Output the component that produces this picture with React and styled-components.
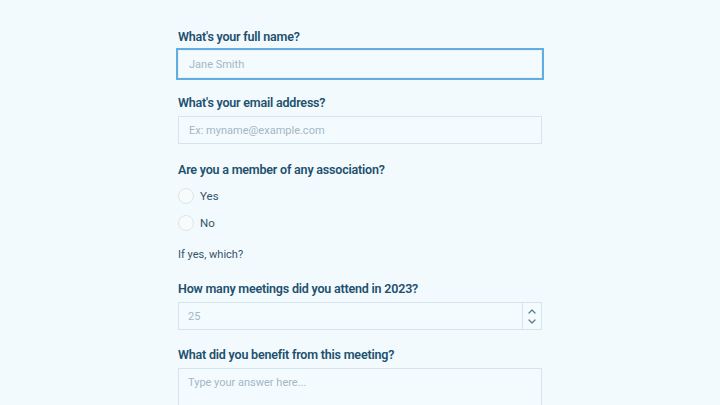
import React from "react";
import styled, { createGlobalStyle } from "styled-components";

const Global = createGlobalStyle`
  html, body { margin: 0; padding: 0; background: #f2fafd; }
  body { font-family: Roboto, "Liberation Sans", sans-serif; }
  * { box-sizing: border-box; }
`;

const Page = styled.div`
  width: 720px;
  height: 405px;
  overflow: hidden;
  background: #f2fafd;
  display: flex;
  justify-content: center;
  padding-top: 29px;
`;

const Form = styled.form`
  width: 364px;
  display: flex;
  flex-direction: column;
`;

const Field = styled.div`
  display: flex;
  flex-direction: column;
  gap: 5px;
  margin-bottom: ${(p) => p.$mb ?? 17}px;
`;

const Label = styled.label`
  font-size: 12.5px;
  line-height: 16px;
  font-weight: 600;
  letter-spacing: -0.2px;
  color: #21506e;
`;

const SubLabel = styled.div`
  font-size: 11px;
  line-height: 16px;
  color: #34536a;
  margin-top: 14px;
  margin-bottom: 18px;
`;

const TextInput = styled.input`
  width: 100%;
  height: 28px;
  border: 1px solid ${(p) => (p.$focused ? "#e4f1f8" : "#d4e5ee")};
  box-shadow: ${(p) => (p.$focused ? "0 0 0 2px #64ace0" : "none")};
  background: #f4fbfe;
  padding: 0 10px;
  font-family: inherit;
  font-size: 11px;
  color: #2a4a60;
  outline: none;
  &::placeholder { color: #a3b7c4; }
`;

const NumberWrap = styled.div`
  display: flex;
  height: 28px;
  border: 1px solid #d4e5ee;
  background: #f4fbfe;
`;

const NumberInput = styled.input`
  flex: 1;
  border: none;
  background: transparent;
  padding: 0 9px;
  font-family: inherit;
  font-size: 11px;
  outline: none;
  &::placeholder { color: #a3b7c4; }
`;

const Spinner = styled.div`
  width: 19px;
  border-left: 1px solid #d4e5ee;
  display: flex;
  flex-direction: column;
  align-items: center;
  justify-content: center;
  gap: 5px;
`;

const TextArea = styled.textarea`
  width: 100%;
  height: 60px;
  border: 1px solid #d4e5ee;
  background: #f4fbfe;
  padding: 7px 9px;
  font-family: inherit;
  font-size: 11px;
  resize: none;
  outline: none;
  &::placeholder { color: #a3b7c4; }
`;

const RadioGroup = styled.div`
  display: flex;
  flex-direction: column;
  gap: 7px;
  margin-top: 3px;
`;

const RadioRow = styled.label`
  display: flex;
  align-items: center;
  gap: 6px;
  height: 20px;
  font-size: 11.5px;
  color: #34536a;
`;

const Circle = styled.span`
  width: 16px;
  height: 16px;
  border-radius: 50%;
  border: 1px solid #dce6ea;
  background: #f7fbfc;
`;

const Chevron = ({ up }) => (
  <svg width="8" height="5" viewBox="0 0 8 5" fill="none">
    <path
      d={up ? "M1 4 L4 1 L7 4" : "M1 1 L4 4 L7 1"}
      stroke="#5b7b90"
      strokeWidth="1.3"
      strokeLinecap="round"
      strokeLinejoin="round"
    />
  </svg>
);

export default function App() {
  return (
    <>
      <Global />
      <Page>
        <Form onSubmit={(e) => e.preventDefault()}>
          <Field>
            <Label>What's your full name?</Label>
            <TextInput $focused placeholder="Jane Smith" />
          </Field>
          <Field $mb={18}>
            <Label>What's your email address?</Label>
            <TextInput placeholder="Ex: myname@example.com" />
          </Field>
          <Field $mb={0}>
            <Label>Are you a member of any association?</Label>
            <RadioGroup>
              <RadioRow>
                <Circle />
                Yes
              </RadioRow>
              <RadioRow>
                <Circle />
                No
              </RadioRow>
            </RadioGroup>
          </Field>
          <SubLabel>If yes, which?</SubLabel>
          <Field>
            <Label>How many meetings did you attend in 2023?</Label>
            <NumberWrap>
              <NumberInput placeholder="25" />
              <Spinner>
                <Chevron up />
                <Chevron />
              </Spinner>
            </NumberWrap>
          </Field>
          <Field>
            <Label>What did you benefit from this meeting?</Label>
            <TextArea placeholder="Type your answer here..." />
          </Field>
        </Form>
      </Page>
    </>
  );
}
